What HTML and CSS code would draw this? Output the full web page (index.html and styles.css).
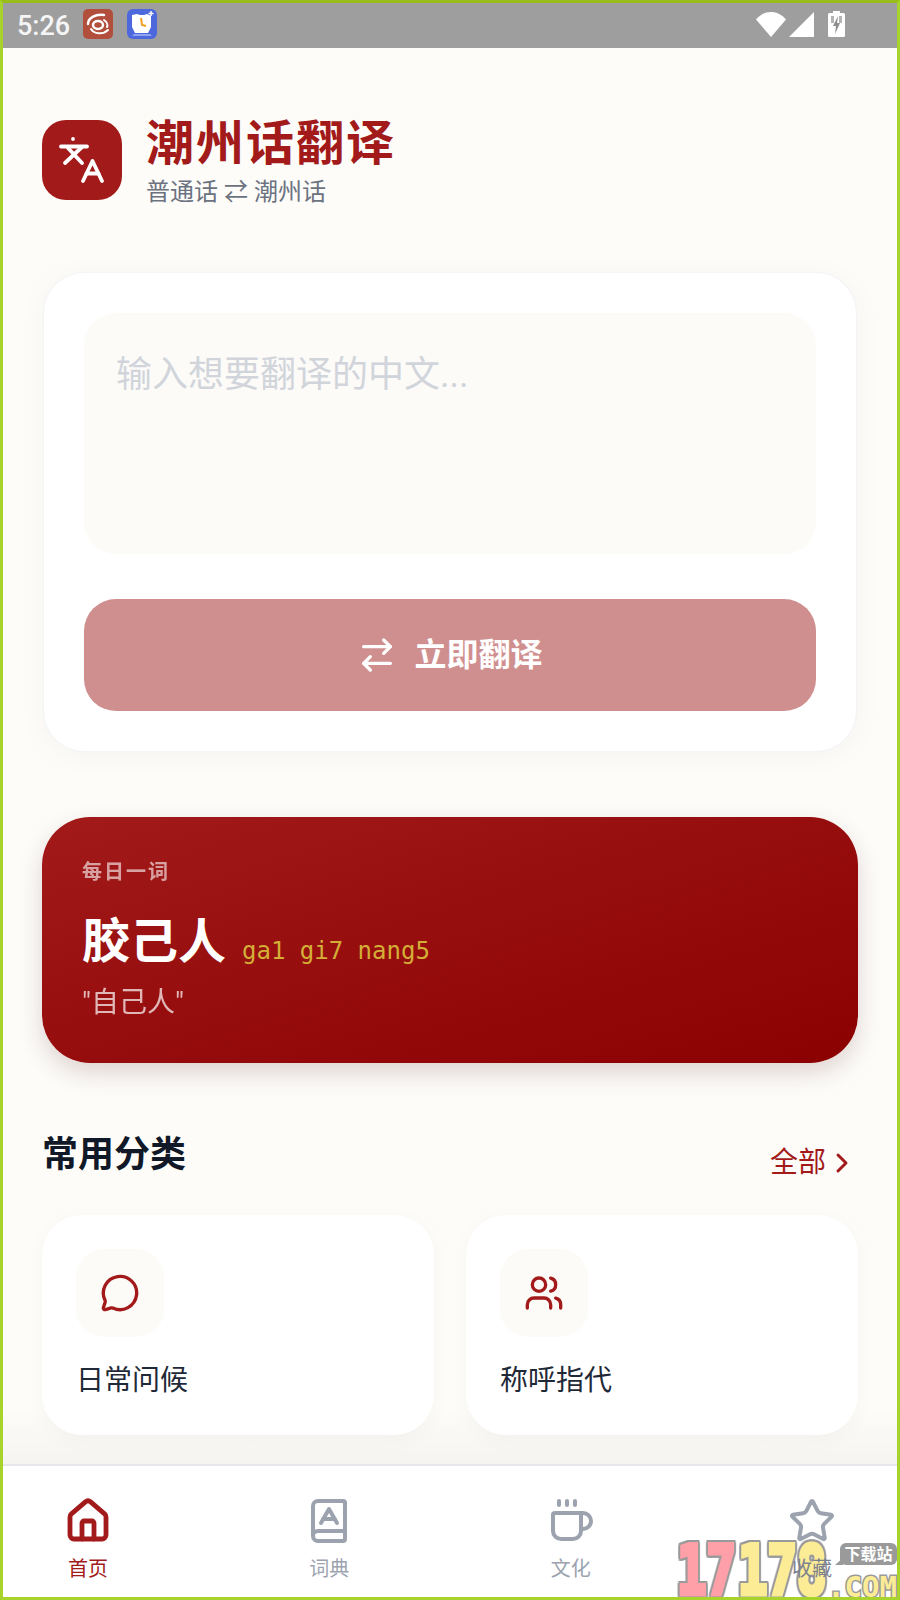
FILE: index.html
```html
<!DOCTYPE html>
<html lang="zh-CN">
<head>
    <meta charset="UTF-8">
    <meta name="viewport" content="width=device-width, initial-scale=1.0">
    <title>潮州话翻译</title>
    <link rel="stylesheet" href="styles.css">
</head>
<body>
<div class="screen">

    <div class="statusBar">
        <span class="clock">5:26</span>
        <svg class="appIcon" viewBox="0 0 30 30">
            <rect width="30" height="30" rx="5" fill="#b14f3c"/>
            <g fill="none" stroke="#fff" stroke-linecap="round">
                <ellipse cx="15" cy="16" rx="5" ry="4" stroke-width="2.500"/>
                <path d="M5 15C5 9 12 5 21 6" stroke-width="2.500"/>
                <path d="M8 20c3 5 12 6 17 1" stroke-width="2"/>
                <path d="M21 11c3 2 4 5 3 7" stroke-width="2"/>
            </g>
        </svg>
        <svg class="appIcon" viewBox="0 0 30 30">
            <rect width="30" height="30" rx="6" fill="#4c68dc"/>
            <path d="M5 6l5-1 3 1h4l3-1 4 2v11l-3 6H8l-3-6z" fill="#fff"/>
            <path d="M7 25h16l2 2H5z" fill="#8ea4f0"/>
            <path d="M14 9l1 7 4 1" fill="none" stroke="#f0a020" stroke-width="2"/>
            <path d="M24 2v5M21.500 4.500h5" stroke="#fff" stroke-width="1.500"/>
        </svg>
        <div class="statusRight">
            <svg class="wifi" viewBox="0 0 30 26"><path d="M0 8.500C8-1.500 22-1.500 30 8.500L15 26z" fill="#fff"/></svg>
            <svg class="signal" viewBox="0 0 25 25"><path d="M25 0v25H0z" fill="#fff"/></svg>
            <svg class="battery" viewBox="0 0 17 26">
                <path d="M5 0h7v2h3.500q1.500 0 1.500 1.500v21q0 1.500-1.500 1.500h-14Q0 26 0 24.500v-21Q0 2 1.500 2H5z" fill="#fff"/>
                <path d="M3 5h3v7H3zM11 5h3v7h-3z" fill="#b5b5b5"/>
                <path d="M10 5l-5 10h3l-1 8 5-11H9z" fill="#8d8d8d"/>
            </svg>
        </div>
    </div>

    <div class="content">
        <div class="header">
            <div class="logo">
                <svg viewBox="0 0 80 80" fill="none" stroke="#fff" stroke-width="3.800" stroke-linecap="round" stroke-linejoin="round">
                    <path d="M19 26.500h26"/>
                    <path d="M31 19v.1"/>
                    <path d="M23 43l17-16"/>
                    <path d="M26 28l14 15"/>
                    <path d="M41 61l9.500-20 9.500 20"/>
                    <path d="M44.500 53.500h12"/>
                </svg>
            </div>
            <div class="headerText">
                <h1 class="appTitle">潮州话翻译</h1>
                <p class="appSub">普通话 ⇄ 潮州话</p>
            </div>
        </div>

        <div class="translateCard">
            <div class="inputBox">输入想要翻译的中文...</div>
            <div class="translateBtn">
                <svg viewBox="0 0 24 24" fill="none" stroke="#fff" stroke-width="2" stroke-linecap="round" stroke-linejoin="round">
                    <path d="m16 3 4 4-4 4"/>
                    <path d="M20 7H4"/>
                    <path d="m8 21-4-4 4-4"/>
                    <path d="M4 17h16"/>
                </svg>
                <span class="btnText">立即翻译</span>
            </div>
        </div>

        <div class="dailyCard">
            <div class="dailyLabel">每日一词</div>
            <div class="dailyWord">
                <span class="word">胶己人</span>
                <span class="phonetic">ga1 gi7 nang5</span>
            </div>
            <div class="meaning">"自己人"</div>
        </div>

        <div class="sectionHead">
            <h2 class="sectionTitle">常用分类</h2>
            <div class="moreLink">
                <span>全部</span>
                <svg viewBox="0 0 24 24" fill="none" stroke="#a21a1a" stroke-width="2.200" stroke-linecap="round" stroke-linejoin="round"><path d="M9 18l6-6-6-6"/></svg>
            </div>
        </div>

        <div class="catGrid">
            <div class="catCard">
                <div class="catIcon">
                    <svg viewBox="0 0 24 24" fill="none" stroke="#a21a1a" stroke-width="2" stroke-linecap="round" stroke-linejoin="round">
                        <path d="M2.992 16.342a2 2 0 0 1 .094 1.167l-1.065 3.29a1 1 0 0 0 1.236 1.168l3.413-.998a2 2 0 0 1 1.099.092 10 10 0 1 0-4.777-4.719"/>
                    </svg>
                </div>
                <div class="catName">日常问候</div>
            </div>
            <div class="catCard">
                <div class="catIcon">
                    <svg viewBox="0 0 24 24" fill="none" stroke="#a21a1a" stroke-width="2" stroke-linecap="round" stroke-linejoin="round">
                        <path d="M16 21v-2a4 4 0 0 0-4-4H6a4 4 0 0 0-4 4v2"/>
                        <circle cx="9" cy="7" r="4"/>
                        <path d="M22 21v-2a4 4 0 0 0-3-3.870"/>
                        <path d="M16 3.130a4 4 0 0 1 0 7.750"/>
                    </svg>
                </div>
                <div class="catName">称呼指代</div>
            </div>
        </div>
    </div>

    <div class="tabBar">
        <div class="tab tabActive">
            <svg viewBox="0 0 24 24" fill="none" stroke="currentColor" stroke-width="2.400" stroke-linecap="round" stroke-linejoin="round">
                <path d="M15 21v-8a1 1 0 0 0-1-1h-4a1 1 0 0 0-1 1v8"/>
                <path d="M3 10a2 2 0 0 1 .709-1.528l7-5.999a2 2 0 0 1 2.582 0l7 5.999A2 2 0 0 1 21 10v9a2 2 0 0 1-2 2H5a2 2 0 0 1-2-2z"/>
            </svg>
            <span>首页</span>
        </div>
        <div class="tab">
            <svg viewBox="0 0 24 24" fill="none" stroke="currentColor" stroke-width="2" stroke-linecap="round" stroke-linejoin="round">
                <path d="M4 19.500v-15A2.500 2.500 0 0 1 6.500 2H19a1 1 0 0 1 1 1v18a1 1 0 0 1-1 1H6.500a1 1 0 0 1 0-5H20"/>
                <path d="m8 13 4-7 4 7"/>
                <path d="M9.100 11h5.700"/>
            </svg>
            <span>词典</span>
        </div>
        <div class="tab">
            <svg viewBox="0 0 24 24" fill="none" stroke="currentColor" stroke-width="2" stroke-linecap="round" stroke-linejoin="round">
                <path d="M10 2v2"/>
                <path d="M14 2v2"/>
                <path d="M16 8a1 1 0 0 1 1 1v8a4 4 0 0 1-4 4H7a4 4 0 0 1-4-4V9a1 1 0 0 1 1-1h14a4 4 0 1 1 0 8h-1"/>
                <path d="M6 2v2"/>
            </svg>
            <span>文化</span>
        </div>
        <div class="tab">
            <svg viewBox="0 0 24 24" fill="none" stroke="currentColor" stroke-width="2" stroke-linecap="round" stroke-linejoin="round">
                <path d="M11.525 2.295a.53.53 0 0 1 .95 0l2.310 4.679a2.123 2.123 0 0 0 1.595 1.160l5.166.756a.53.53 0 0 1 .294.904l-3.736 3.638a2.123 2.123 0 0 0-.611 1.878l.882 5.140a.53.53 0 0 1-.771.560l-4.618-2.428a2.122 2.122 0 0 0-1.973 0L6.396 21.010a.53.53 0 0 1-.770-.560l.881-5.139a2.122 2.122 0 0 0-.611-1.879L2.160 9.795a.53.53 0 0 1 .294-.906l5.165-.755a2.122 2.122 0 0 0 1.597-1.160z"/>
            </svg>
            <span class="tabLabelTop">收藏</span>
        </div>
    </div>

    <!-- site watermark sits over the tab bar -->
    <div class="watermark">
        <span class="wmDigits wmPink">17</span>
        <span class="wmDigits wmYellow">178</span>
        <span class="wmTag">下载站</span>
        <span class="wmCom">.COM</span>
    </div>
</div>
</body>
</html>
```

FILE: styles.css
```css
* {
    box-sizing: border-box;
}

body {
    margin: 0;
    font-family: Roboto, "Noto Sans CJK SC", sans-serif;
}

h1, h2, p {
    margin: 0;
}

.screen {
    position: relative;
    width: 900px;
    height: 1600px;
    display: flex;
    flex-direction: column;
    background-color: #fdfcf9;
    border: 3px solid #a8d22c;
    border-top-color: #99bd1b;
    overflow: hidden;
}

/* Status bar */
.statusBar {
    height: 45px;
    flex-shrink: 0;
    display: flex;
    align-items: center;
    padding: 0 52px 3px 14px;
    background-color: #9e9e9e;
}

.clock {
    font-size: 27px;
    font-weight: 500;
    padding-top: 3px;
    color: #f5f5f5;
    margin-right: 13px;
}

.appIcon {
    width: 30px;
    height: 30px;
    margin-right: 14px;
}

.statusRight {
    margin-left: auto;
    display: flex;
    align-items: center;
}

.wifi {
    width: 30px;
    height: 26px;
    margin-right: 3px;
}

.signal {
    width: 25px;
    height: 25px;
    margin-right: 14px;
}

.battery {
    width: 17px;
    height: 26px;
}

/* Main content */
.content {
    flex: 1;
    padding: 68px 39px 0;
    background: linear-gradient(to bottom, #fdfcf9 96%, #f5f4f0 100%);
}

.header {
    height: 88px;
    display: flex;
    align-items: center;
    gap: 24px;
    margin-bottom: 69px;
}

.logo {
    width: 80px;
    height: 80px;
    border-radius: 24px;
    background-color: #a21a1a;
}

.logo svg {
    display: block;
    width: 80px;
    height: 80px;
}

.headerText {
    padding-top: 6px;
}

.appTitle {
    font-size: 48px;
    line-height: 52px;
    font-weight: 700;
    letter-spacing: 2px;
    color: #a21a1a;
}

.appSub {
    font-size: 24px;
    line-height: 32px;
    margin-top: 6px;
    color: #6b7280;
}

.translateCard {
    margin: 0 2px 66px;
    height: 478px;
    padding: 40px;
    border-radius: 40px;
    background-color: #fff;
    box-shadow: 0 0 0 1px #f3f4f6, 0 4px 30px rgba(0, 0, 0, 0.04);
}

.inputBox {
    height: 241px;
    padding: 35px 32px;
    border-radius: 32px;
    background-color: #fcfbf8;
    font-size: 36px;
    line-height: 54px;
    color: #d1d5db;
}

.translateBtn {
    height: 112px;
    margin-top: 45px;
    border-radius: 32px;
    background-color: #d08f8f;
    display: flex;
    align-items: center;
    justify-content: center;
    gap: 17px;
    font-size: 32px;
    font-weight: 700;
    color: #fff;
}

.translateBtn svg {
    width: 40px;
    height: 40px;
}

.btnText {
    padding-bottom: 7px;
}

.dailyCard {
    height: 246px;
    padding: 40px 40px 0;
    border-radius: 48px;
    background: linear-gradient(to bottom right, #a21a1a, #8b0000);
    box-shadow: 0 10px 25px rgba(60, 0, 0, 0.16);
    color: #fff;
}

.dailyLabel {
    font-size: 20px;
    line-height: 30px;
    font-weight: 700;
    letter-spacing: 2px;
    opacity: 0.6;
}

.dailyWord {
    display: flex;
    align-items: flex-end;
    gap: 16px;
    margin-top: 25px;
}

.word {
    font-size: 48px;
    line-height: 60px;
    font-weight: 700;
}

.phonetic {
    font-family: "DejaVu Sans Mono", monospace;
    font-size: 24px;
    line-height: 34px;
    margin-bottom: 4px;
    color: #d4af37;
}

.meaning {
    font-size: 28px;
    line-height: 40px;
    margin-top: 11px;
    opacity: 0.7;
}

.sectionHead {
    display: flex;
    justify-content: space-between;
    align-items: flex-start;
    margin-top: 60px;
    height: 57px;
}

.sectionTitle {
    font-size: 36px;
    line-height: 54px;
    font-weight: 700;
    padding-top: 5px;
    color: #111827;
}

.moreLink {
    display: flex;
    align-items: center;
    margin-top: 19px;
    font-size: 28px;
    line-height: 42px;
    color: #a21a1a;
}

.moreLink svg {
    width: 32px;
    height: 32px;
}

.catGrid {
    display: grid;
    grid-template-columns: 1fr 1fr;
    gap: 32px;
    margin-top: 35px;
}

.catCard {
    height: 220px;
    padding: 34px;
    border-radius: 40px;
    background-color: #fff;
    box-shadow: 0 4px 20px rgba(0, 0, 0, 0.03);
}

.catIcon {
    width: 88px;
    height: 88px;
    border-radius: 28px;
    background-color: #fcfbf8;
    display: flex;
    align-items: center;
    justify-content: center;
}

.catIcon svg {
    width: 40px;
    height: 40px;
}

.catName {
    margin-top: 23px;
    font-size: 28px;
    line-height: 42px;
    color: #1f2937;
}

/* Bottom tabs */
.tabBar {
    flex-shrink: 0;
    height: 133px;
    display: flex;
    justify-content: space-between;
    padding: 0 39px;
    background-color: #fff;
    border-top: 2px solid #e5e7eb;
}

.tab {
    width: 92px;
    display: flex;
    flex-direction: column;
    align-items: center;
    padding-top: 31px;
    color: #9ca3af;
    font-size: 20px;
    line-height: 30px;
}

.tab svg {
    width: 48px;
    height: 48px;
    margin-bottom: 9px;
}

.tabActive {
    color: #a21a1a;
}

/* this label shows through the watermark in the screenshot */
.tabLabelTop {
    position: relative;
    z-index: 2;
    color: #7b818e;
}

/* Watermark */
.watermark {
    position: absolute;
    right: 0;
    bottom: 0;
    width: 220px;
    height: 55px;
    font-family: "DejaVu Sans Mono", monospace;
    font-weight: 700;
}

.wmDigits {
    position: absolute;
    top: 2px;
    font-size: 68px;
    line-height: 53px;
    transform: scaleX(0.72);
    transform-origin: left top;
    filter: drop-shadow(2px 0 0 #9a9a9a) drop-shadow(-2px 0 0 #9a9a9a) drop-shadow(0 2px 0 #9a9a9a) drop-shadow(0 -2px 0 #9a9a9a);
}

.wmPink {
    left: 0;
    color: #ff9fa8;
    -webkit-text-stroke: 5px #ff9fa8;
}

.wmYellow {
    left: 61px;
    color: #fdec96;
    -webkit-text-stroke: 5px #fdec96;
}

.wmTag {
    position: absolute;
    right: 0;
    top: 1px;
    width: 57px;
    height: 22px;
    border-radius: 6px;
    background-color: #9a9a9a;
    color: #fff;
    font-family: "Noto Sans CJK SC", sans-serif;
    font-size: 16px;
    line-height: 21px;
    text-align: center;
}

.wmTag::after {
    content: "";
    position: absolute;
    left: -5px;
    bottom: 0;
    border-style: solid;
    border-width: 0 0 7px 8px;
    border-color: transparent transparent #9a9a9a transparent;
}

.wmCom {
    position: absolute;
    right: 0;
    bottom: 0;
    font-size: 29px;
    line-height: 19px;
    color: #fdec96;
    -webkit-text-stroke: 3px #9a9a9a;
    paint-order: stroke fill;
}
```
